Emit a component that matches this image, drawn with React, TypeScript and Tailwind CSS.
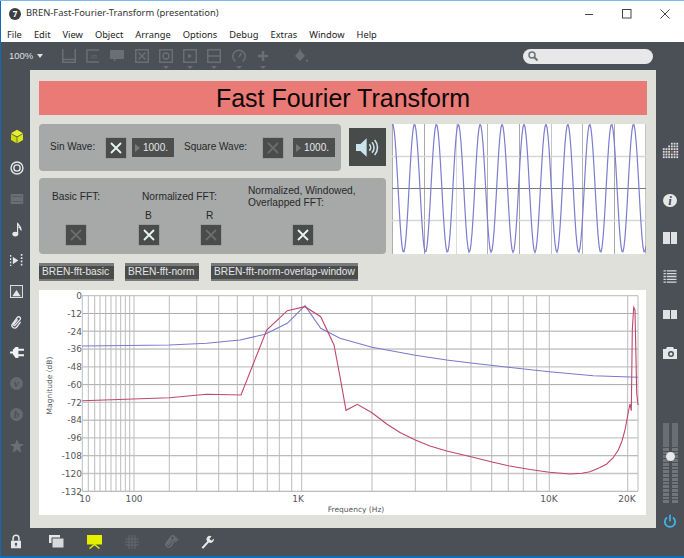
import React from "react";

const sans = "font-['Liberation_Sans',Arial,sans-serif]";
const dim = "#6b6f75";
const lite = "#e6e7e8";

function Icon({ children, w = 20, h = 20, box = "0 0 20 20" }: { children: React.ReactNode; w?: number; h?: number; box?: string }) {
  return (
    <svg width={w} height={h} viewBox={box} className="block shrink-0">
      {children}
    </svg>
  );
}

const LockIcon = () => (
  <Icon w={12} h={15} box="0 0 14 18">
    <path d="M3.500 8V5a3.500 3.500 0 0 1 7 0v3" fill="none" stroke={lite} strokeWidth="1.800" />
    <path fillRule="evenodd" d="M1 8h12v9H1zM7 10.500a1.500 1.500 0 0 0-.7 2.800V15h1.400v-1.700A1.500 1.500 0 0 0 7 10.500z" fill={lite} />
  </Icon>
);

const ClipIcon = ({ color, size = 15 }: { color: string; size?: number }) => (
  <Icon w={size} h={size}>
    <path
      d="M15.500 10 9.500 16a3.500 3.500 0 0 1-5-5l7.500-7.500a2.300 2.300 0 0 1 3.300 3.300L7.800 13.300a1.100 1.100 0 0 1-1.600-1.600L12 6"
      transform="rotate(-8 10 10)"
      fill="none"
      stroke={color}
      strokeWidth="1.800"
    />
  </Icon>
);

function LeftBar() {
  return (
    <div className="w-[29px] shrink-0 flex flex-col items-center pt-[57px] pl-[2px]">
      <div className="h-[31px] flex flex-col justify-center -mt-[6px]">
        <Icon w={14} h={15} box="0 0 18 20">
          <path d="M9 1 17 5.500 9 10 1 5.500z" fill="#e6f02a" />
          <path d="M1 6.500 8.500 11v8L1 14.500z" fill="#cfdb10" />
          <path d="M17 6.500 9.500 11v8l7.500-4.500z" fill="#dbe61a" />
        </Icon>
      </div>
      <div className="h-[31px] flex items-center">
        <Icon w={14} h={14}>
          <circle cx="10" cy="10" r="8.500" fill="none" stroke={lite} strokeWidth="2" />
          <circle cx="10" cy="10" r="4.500" fill="none" stroke={lite} strokeWidth="2" />
        </Icon>
      </div>
      <div className="h-[31px] flex items-center">
        <Icon w={14} h={10} box="0 0 15 12">
          <path d="M1 0h13a1 1 0 0 1 1 1v10a1 1 0 0 1-1 1H1a1 1 0 0 1-1-1V1a1 1 0 0 1 1-1z" fill={dim} />
          <path d="M1.500 3h12M1.500 9h12" stroke="#55595f" strokeWidth="1" />
        </Icon>
      </div>
      <div className="h-[31px] flex items-center">
        <Icon w={10} h={15} box="0 0 12 18">
          <ellipse cx="4" cy="14.500" rx="3.600" ry="2.800" fill={lite} />
          <path d="M6.700 14V1c0 3 4.800 4 4.300 9-.5-2.500-2.500-3.800-3.300-4" fill="none" stroke={lite} strokeWidth="1.400" />
        </Icon>
      </div>
      <div className="h-[31px] flex items-center">
        <Icon w={13} h={13} box="0 0 14 14">
          <path d="M3 3v8l6-4z" fill={lite} />
          <path d="M.5 1v12M12.500 0v14" stroke={lite} strokeWidth="1.800" strokeDasharray="2 1.500" fill="none" />
        </Icon>
      </div>
      <div className="h-[31px] flex items-center">
        <Icon w={13} h={13} box="0 0 14 14">
          <rect x=".5" y=".5" width="13" height="13" fill="#565a60" stroke={lite} />
          <path d="M2.500 12 7 5.500 11.500 12z" fill={lite} />
        </Icon>
      </div>
      <div className="h-[30px] flex items-center">
        <ClipIcon color={lite} />
      </div>
      <div className="h-[31px] flex items-center">
        <Icon w={14} h={13} box="0 0 15 14">
          <path d="M0 6h3V4l3-3h3v12H6L3 9V8H0zM9 3h6v2H9zM9 9h6v2H9z" fill="#f2f3f3" />
        </Icon>
      </div>
      {["v", "b"].map((l) => (
        <div key={l} className="h-[31px] flex items-center">
          <div className="w-[13px] h-[13px] rounded-full bg-[#666a70] flex items-center justify-center font-['Liberation_Serif',serif] italic font-bold text-[11px] leading-none text-[#4b4f56]">
            {l}
          </div>
        </div>
      ))}
      <div className="h-[31px] flex items-center">
        <Icon w={14} h={14} box="0 0 14 14">
          <path d="M7 0l2 5h5l-4 3.300L11.400 14 7 10.700 2.600 14 4 8.300 0 5h5z" fill={dim} />
        </Icon>
      </div>
    </div>
  );
}

function RightBar() {
  return (
    <div className="w-[28px] shrink-0 flex flex-col items-center pt-[71px]">
      <Icon w={17} h={18} box="0 0 17 20">
        {Array.from({ length: 6 }).flatMap((_, r) =>
          Array.from({ length: 6 }).map((_, c) =>
            r < 2 && c < 3 && !(c === 2 && r === 1) ? null : (
              <rect key={`${r}-${c}`} x={c * 3} y={r * 3 + 2} width="2" height="2" fill={r === 3 && c === 3 ? "#e0601a" : "#dcdee0"} />
            ),
          ),
        )}
      </Icon>
      <div className="mt-[35px]">
        <div className="w-[14px] h-[13px] rounded-full bg-[#e6e7e8] flex items-center justify-center font-['Liberation_Serif',serif] italic font-bold text-[13px] leading-none text-[#4b4f56]">
          i
        </div>
      </div>
      <div className="mt-[25px] flex gap-px">
        <div className="w-[6.500px] h-[12px] bg-[#e0e1e2]" />
        <div className="w-[6.500px] h-[12px] bg-[#e0e1e2]" />
      </div>
      <div className="mt-[26px]">
        <Icon w={14} h={13} box="0 0 14 14">
          <path d="M0 1h14M0 4h14M0 7h14M0 10h14M0 13h14" stroke="#d8dadc" strokeWidth="1.400" />
          <path d="M3 0v14" stroke="#4b4f56" strokeWidth="1" />
        </Icon>
      </div>
      <div className="mt-[27px] flex gap-px">
        <div className="w-[6.500px] h-[9px] bg-[#e0e1e2]" />
        <div className="w-[6.500px] h-[9px] bg-[#e0e1e2]" />
      </div>
      <div className="mt-[27px]">
        <Icon w={14} h={14} box="0 0 14 14">
          <path fillRule="evenodd" d="M0 3h3l1-2h6l1 2h3v10H0zM8 5a3 3 0 1 0 0 6 3 3 0 0 0 0-6z" fill="#e6e7e8" />
          <circle cx="8" cy="8" r="1.500" fill="#e6e7e8" />
        </Icon>
      </div>
      <div className="mt-[63px] relative w-[15px] h-[100px] flex justify-between">
        {[0, 1].map((i) => (
          <div key={i} className="w-[6px] h-full flex flex-col">
            <div className="h-[24px] bg-[#6a6e73]" />
            <div className="flex-1 flex flex-col gap-px pt-px">
              {Array.from({ length: 15 }).map((_, k) => (
                <div key={k} className="flex-1 bg-[#72767b]" />
              ))}
            </div>
          </div>
        ))}
        <div className="absolute left-[3px] top-[29px] w-[9px] h-[9px] rounded-full bg-[#e8e9ea]" />
      </div>
      <div className="mt-[11px]">
        <Icon w={12} h={14} box="0 0 14 14">
          <path d="M7 .500v6" stroke="#3fb6ea" strokeWidth="2" strokeLinecap="round" />
          <path d="M3.600 3A6 6 0 1 0 10.400 3" fill="none" stroke="#3fb6ea" strokeWidth="2" />
        </Icon>
      </div>
    </div>
  );
}

function ToolIcon({ children, arrow = false, className = "" }: { children: React.ReactNode; arrow?: boolean; className?: string }) {
  return (
    <div className={`relative w-[24px] h-[28px] flex items-center justify-center ${className}`}>
      {children}
      {arrow && <div className="absolute left-[9px] top-[24px] w-0 h-0 border-x-[3px] border-x-transparent border-t-[3px] border-t-[#6b6f75]" />}
    </div>
  );
}

function Toolbar() {
  const s = { fill: "none", stroke: dim, strokeWidth: 1.500 };
  return (
    <div className="h-[28px] shrink-0 flex items-center pl-[8px] pr-[31px]">
      <span className={`${sans} text-[9.500px] text-[#dfe0e1] w-[25px] whitespace-nowrap`}>100%</span>
      <div className="w-0 h-0 ml-[3px] border-x-[3px] border-x-transparent border-t-[4px] border-t-[#dfe0e1]" />
      <div className="ml-[14px] flex items-center">
        <ToolIcon>
          <Icon w={14} h={14} box="0 0 14 14">
            <path d="M.75 0v14M13.250 0v14M.75 10.500h12.500M.75 13.250h12.500" {...s} />
          </Icon>
        </ToolIcon>
        <ToolIcon>
          <Icon w={14} h={14} box="0 0 14 14">
            <path d="M13 1H1v12h12" {...s} />
            <text x="5" y="9.500" fontSize="7" fontStyle="italic" fill={dim} fontFamily="Liberation Sans">m</text>
          </Icon>
        </ToolIcon>
        <ToolIcon>
          <Icon w={14} h={13} box="0 0 14 13">
            <path d="M0 0h14v9H6l-2 3V9H0z" fill={dim} />
          </Icon>
        </ToolIcon>
        <ToolIcon className="ml-px">
          <Icon w={14} h={14} box="0 0 14 14">
            <rect x=".75" y=".75" width="12.500" height="12.500" {...s} />
            <path d="M3.500 3.500l7 7M10.500 3.500l-7 7" {...s} />
          </Icon>
        </ToolIcon>
        <ToolIcon arrow>
          <Icon w={14} h={14} box="0 0 14 14">
            <rect x=".75" y=".75" width="12.500" height="12.500" {...s} />
            <circle cx="7" cy="7" r="3" {...s} />
          </Icon>
        </ToolIcon>
        <ToolIcon arrow>
          <Icon w={14} h={14} box="0 0 14 14">
            <rect x=".75" y=".75" width="12.500" height="12.500" {...s} />
            <path d="M5 4.500v5l4-2.500z" fill={dim} />
          </Icon>
        </ToolIcon>
        <ToolIcon arrow>
          <Icon w={14} h={14} box="0 0 14 14">
            <rect x=".75" y=".75" width="12.500" height="12.500" {...s} />
            <path d="M1 7h12" {...s} />
          </Icon>
        </ToolIcon>
        <ToolIcon arrow className="ml-px">
          <Icon w={14} h={14} box="0 0 14 14">
            <path d="M3.500 12.500a6.200 6.200 0 1 1 7 0" {...s} />
            <path d="M7 8l2.500-4" {...s} />
          </Icon>
        </ToolIcon>
        <ToolIcon arrow>
          <Icon w={12} h={12} box="0 0 12 12">
            <path d="M6 1v10M1 6h10" fill="none" stroke={dim} strokeWidth="2.500" />
          </Icon>
        </ToolIcon>
        <ToolIcon className="ml-[14px]">
          <Icon w={14} h={14} box="0 0 14 14">
            <path d="M6 1 1 7l5 5 5-5z" fill={dim} />
            <path d="M6 0v5" stroke={dim} strokeWidth="1" />
            <path d="M13 10c-.8 1-1 1.500-1 2a1 1 0 0 0 2 0c0-.5-.2-1-1-2z" fill={dim} />
          </Icon>
        </ToolIcon>
      </div>
      <div className="ml-auto w-[130px] h-[15px] rounded-full bg-[#e8e8e8] flex items-center pl-[5px]">
        <Icon w={10} h={10} box="0 0 10 10">
          <circle cx="4" cy="4" r="3" fill="none" stroke="#6f7378" strokeWidth="1.500" />
          <path d="M6.200 6.200 9.500 9.500" stroke="#6f7378" strokeWidth="2" />
        </Icon>
      </div>
    </div>
  );
}

function Toggle({ on = false }: { on?: boolean }) {
  const c = on ? "#eaf4f5" : "#6a6d6c";
  return (
    <div className="w-[20px] h-[20px] shrink-0 flex items-center justify-center bg-[#494c4b] shadow-[0_0_0_0.5px_#8a8d8c]">
      <svg width="12" height="12" viewBox="0 0 12 12">
        <path d="M1 1l10 10M11 1 1 11" stroke={c} strokeWidth="1.800" />
      </svg>
    </div>
  );
}

function NumberBox() {
  return (
    <div className="w-[42px] h-[19px] shrink-0 bg-[#4c4f4e] flex items-center pl-[3px] gap-[3px]">
      <div className="w-0 h-0 border-y-[4.500px] border-y-transparent border-l-[5px] border-l-[#75797a]" />
      <span className="text-[10px] text-[#e6e8e8] leading-none">1000.</span>
    </div>
  );
}

function Message({ label, w, className = "" }: { label: string; w: string; className?: string }) {
  return (
    <div className={`${w} h-[18px] flex flex-col bg-[#77797a] py-[2.500px] shrink-0 ${className}`}>
      <div className="flex-1 bg-[#4a4b4b] flex items-center pl-[3px] text-[10.200px] text-[#e4e5e5] leading-none whitespace-nowrap">{label}</div>
    </div>
  );
}

const sine = Array.from({ length: 255 }, (_, i) => {
  const y = 64.3 - 64 * Math.cos((2 * Math.PI * (i - 0.6)) / 21.9);
  return `${i},${y.toFixed(2)}`;
}).join(" ");

function Scope() {
  const vs = [
    [0, "#aeaeae"], [32, "#a9a9a9"], [64, "#dcdcdc"], [95, "#b4b4b4"], [127, "#a9a9a9"],
    [159, "#c4c4c4"], [190, "#b4b4b4"], [222, "#a9a9a9"], [253, "#c4c4c4"],
  ] as const;
  return (
    <svg width="254" height="130" viewBox="0 0 254 130" className="block bg-white shrink-0">
      {vs.map(([x, c]) => (
        <path key={x} d={`M${x + 0.5} 0v130`} stroke={c} />
      ))}
      <path d="M0 32.500h254M0 96.500h254" stroke="#d6d6d6" strokeWidth="1.500" />
      <path d="M0 64.500h254" stroke="#7a7a7a" />
      <polyline points={sine} fill="none" stroke="#7c7cd0" strokeWidth="1.200" />
    </svg>
  );
}

const vGrid = [
  82.3, 88.3, 94.7, 100, 105.7, 111, 116, 120.7, 125.3, 129.7, 134, 169.3, 196.7, 218.7, 237.3, 253.3, 267.3, 279.3, 291.7, 301.7, 372,
  415.3, 446.7, 471, 491.7, 508.3, 523.3, 536.7, 549.3, 627.7, 638,
];
const yTicks = [0, -12, -24, -36, -48, -60, -72, -84, -96, -108, -120, -132];
const pts = (a: number[][]) => a.map(([x, y]) => `${(x - 39).toFixed(1)},${(y - 290).toFixed(1)}`).join(" ");

const blue = pts([
  [82.3, 346], [169.3, 345], [206.7, 343.3], [240, 340], [265, 334.3], [287.3, 323.3], [305, 305.7], [320.7, 328.3], [340, 338.3], [372, 347.3],
  [415.3, 355.3], [446.7, 360], [471, 363], [508.3, 367.3], [549.3, 371.7], [593.3, 375.7], [638, 377.3],
]);
const red = pts([
  [82.3, 400.7], [169.3, 397.7], [206.7, 394.3], [241, 395], [266.7, 330], [287.3, 310.7], [305, 306.7], [320.7, 316.7], [334, 345], [340, 376.7],
  [346, 410.3], [357.3, 404.3], [372, 412.7], [386.7, 424], [400, 432.500], [415.3, 440], [430, 446], [446.7, 451], [471, 456.7], [490, 461.500], [508.3, 465.7],
  [530, 469.500], [549.3, 472.3], [570, 474], [582, 473.300], [590, 471.7], [600, 467.500], [606.7, 464], [613, 458], [618.3, 450], [622, 441], [625, 430], [628.7, 410], [630, 404],
  [631.3, 410.7], [632.3, 330], [633.7, 307.3], [635, 310], [636.7, 393], [638, 405],
]);

function Chart() {
  const t = { fontSize: 9, fill: "#55585a", fontFamily: "DejaVu Sans, sans-serif" };
  return (
    <svg width="607" height="225" viewBox="0 0 607 225" className="block bg-white">
      {yTicks.map((v, i) => {
        const y = 5.7 + i * 17.78;
        return (
          <g key={v}>
            <path d={`M43.300 ${y}H599`} stroke={i % 2 === 1 ? "#a9a9a9" : "#c6c6c6"} strokeWidth={i % 2 === 1 ? 1 : 1.300} />
            <text x="43" y={y + 3.300} textAnchor="end" {...t}>{v}</text>
          </g>
        );
      })}
      {vGrid.map((x) => (
        <path key={x} d={`M${x - 39} 5.700V201.300`} stroke="#bcbcbc" strokeWidth="1" />
      ))}
      <polyline points={blue} fill="none" stroke="#7a7acb" strokeWidth="1.100" />
      <polyline points={red} fill="none" stroke="#c0476a" strokeWidth="1.100" />
      <text x="46" y="211.500" textAnchor="middle" {...t}>10</text>
      <text x="95" y="211.500" textAnchor="middle" {...t}>100</text>
      <text x="259" y="211.500" textAnchor="middle" {...t}>1K</text>
      <text x="510" y="211.500" textAnchor="middle" {...t}>10K</text>
      <text x="588" y="211.500" textAnchor="middle" {...t}>20K</text>
      <text x="317" y="222" textAnchor="middle" {...t} fontSize="7.500">Frequency (Hz)</text>
      <text transform="translate(13 66) rotate(-90)" textAnchor="middle" {...t} fontSize="7.500" x="-29.500" y="0">Magnitude (dB)</text>
    </svg>
  );
}

function Canvas() {
  return (
    <div className={`${sans} w-[626px] h-[458px] shrink-0 bg-[#dfe0da] pt-[11px] px-[9px]`}>
      <div className="h-[34px] bg-[#ea7a76] flex items-center justify-center text-[25px] text-[#0c0808] leading-none">Fast Fourier Transform</div>
      <div className="mt-[9px] flex">
        <div className="w-[353px] shrink-0">
          <div className="flex items-start">
            <div className="w-[302px] h-[47px] rounded-[4px] bg-[#a6a9a7] flex items-center text-[10px] text-[#26282a] pl-[11px]">
              <span className="w-[56px] -mt-[3px]">Sin Wave:</span>
              <Toggle on />
              <div className="ml-[6px]"><NumberBox /></div>
              <span className="ml-[10px] w-[79px] -mt-[3px]">Square Wave:</span>
              <Toggle />
              <div className="ml-[10px]"><NumberBox /></div>
            </div>
            <div className="ml-[8px] mt-[4px] w-[37px] h-[38px] bg-[#474b4a] flex items-center justify-center">
              <svg width="24" height="21" viewBox="0 0 27 22">
                <path d="M0 7h5l7-6.500v21L5 15H0z" fill="#c9e4ea" />
                <path d="M15 7.500a5 5 0 0 1 0 7M18 5a9 9 0 0 1 0 12M21 2.500a13 13 0 0 1 0 17" fill="none" stroke="#c9e4ea" strokeWidth="1.800" />
              </svg>
            </div>
          </div>
          <div className="mt-[7px] w-[347px] h-[76px] rounded-[4px] bg-[#a6a9a7] text-[10.200px] text-[#26282a] leading-[12px] pt-[6px]">
            <div className="flex h-[24px] items-center pt-px">
              <span className="ml-[13px] w-[90px]">Basic FFT:</span>
              <span className="w-[106px]">Normalized FFT:</span>
              <span>Normalized, Windowed,<br />Overlapped FFT:</span>
            </div>
            <div className="flex h-[12px] mt-[2px] items-center">
              <span className="ml-[106px] w-[61px]">B</span>
              <span>R</span>
            </div>
            <div className="flex mt-[3px]">
              <div className="ml-[27px]"><Toggle /></div>
              <div className="ml-[53px]"><Toggle on /></div>
              <div className="ml-[42px]"><Toggle /></div>
              <div className="ml-[72px]"><Toggle on /></div>
            </div>
          </div>
        </div>
        <Scope />
      </div>
      <div className="mt-[9px] flex">
        <Message label="BREN-fft-basic" w="w-[75px]" />
        <Message label="BREN-fft-norm" w="w-[74px]" className="ml-[11px]" />
        <Message label="BREN-fft-norm-overlap-window" w="w-[147px]" className="ml-[12px]" />
      </div>
      <div className="mt-[9px]">
        <Chart />
      </div>
    </div>
  );
}

function BottomBar() {
  return (
    <div className="h-[27px] shrink-0 flex items-center pl-[8px]">
      <div className="w-[14px] flex justify-center"><LockIcon /></div>
      <div className="ml-[26px]">
        <Icon w={15} h={13} box="0 0 15 13">
          <rect x="0" y="0" width="11" height="8" fill="#e6e7e8" />
          <rect x="3" y="3" width="12" height="10" fill="#d8d9da" stroke="#4b4f56" />
        </Icon>
      </div>
      <div className="ml-[23px]">
        <Icon w={15} h={14} box="0 0 15 14">
          <rect x="0" y="0" width="15" height="9.500" fill="#e4f000" />
          <path d="M7.500 9.500 2.500 13.500M7.500 9.500l5 4" stroke="#e4f000" strokeWidth="1.500" />
        </Icon>
      </div>
      <div className="ml-[23px]">
        <Icon w={14} h={14} box="0 0 14 14">
          <path d="M4 0v14M7 0v14M10 0v14M0 4h14M0 7h14M0 10h14" stroke="#65696f" strokeWidth="1" />
        </Icon>
      </div>
      <div className="ml-[24px] relative">
        <ClipIcon color={dim} />
        <div className="absolute -right-[1px] -top-[1px] text-[11px] leading-none text-[#6b6f75] font-bold">+</div>
      </div>
      <div className="ml-[22px]">
        <Icon w={14} h={14} box="0 0 14 14">
          <path d="M1.500 12.500 7.300 6.300A3.300 3.300 0 0 1 11.600 1.400L9.500 3.500l1 1.500 1.500.5L13.600 3.500a3.300 3.300 0 0 1-4.700 4L3.200 13.800z" fill="#e6e7e8" />
        </Icon>
      </div>
    </div>
  );
}

export default function App() {
  const menu = ["File", "Edit", "View", "Object", "Arrange", "Options", "Debug", "Extras", "Window", "Help"];
  return (
    <div className="w-[684px] h-[558px] overflow-hidden bg-[#0f6cb5] flex flex-col">
      <div className="h-px bg-[#7fb8ee] shrink-0" />
      <div className="ml-px flex-1 flex flex-col min-h-0">
        <div className="h-[27px] bg-white shrink-0 flex items-center font-['Noto_Sans',sans-serif] text-[9.400px] text-[#333] pl-[8px] pb-[2px]">
          <div className="w-[12px] h-[12px] rounded-full bg-[#3d4043] flex items-center justify-center text-[8px] leading-none font-bold text-white">7</div>
          <span className="ml-[5px]">BREN-Fast-Fourier-Transform (presentation)</span>
          <div className="ml-auto flex items-center pr-[14px]">
            <svg width="10" height="10" viewBox="0 0 10 10" className="mr-[27px]"><path d="M0 5.500h8" stroke="#444" /></svg>
            <svg width="10" height="10" viewBox="0 0 10 10" className="mr-[28px]"><rect x=".5" y=".5" width="8.500" height="8.500" fill="none" stroke="#444" /></svg>
            <svg width="10" height="10" viewBox="0 0 10 10"><path d="M.5.500l9 9M9.500.500l-9 9" stroke="#444" /></svg>
          </div>
        </div>
        <div className="h-[14px] bg-white shrink-0 flex items-center gap-[12px] pl-[6px] font-['Noto_Sans',sans-serif] text-[9.300px] leading-none text-[#222]">
          {menu.map((m) => (
            <span key={m}>{m}</span>
          ))}
        </div>
        <div className="flex-1 flex flex-col bg-[#4b4f56] min-h-0">
          <Toolbar />
          <div className="flex h-[458px] shrink-0">
            <LeftBar />
            <Canvas />
            <RightBar />
          </div>
          <BottomBar />
        </div>
        <div className="h-[2px] shrink-0" />
      </div>
    </div>
  );
}
